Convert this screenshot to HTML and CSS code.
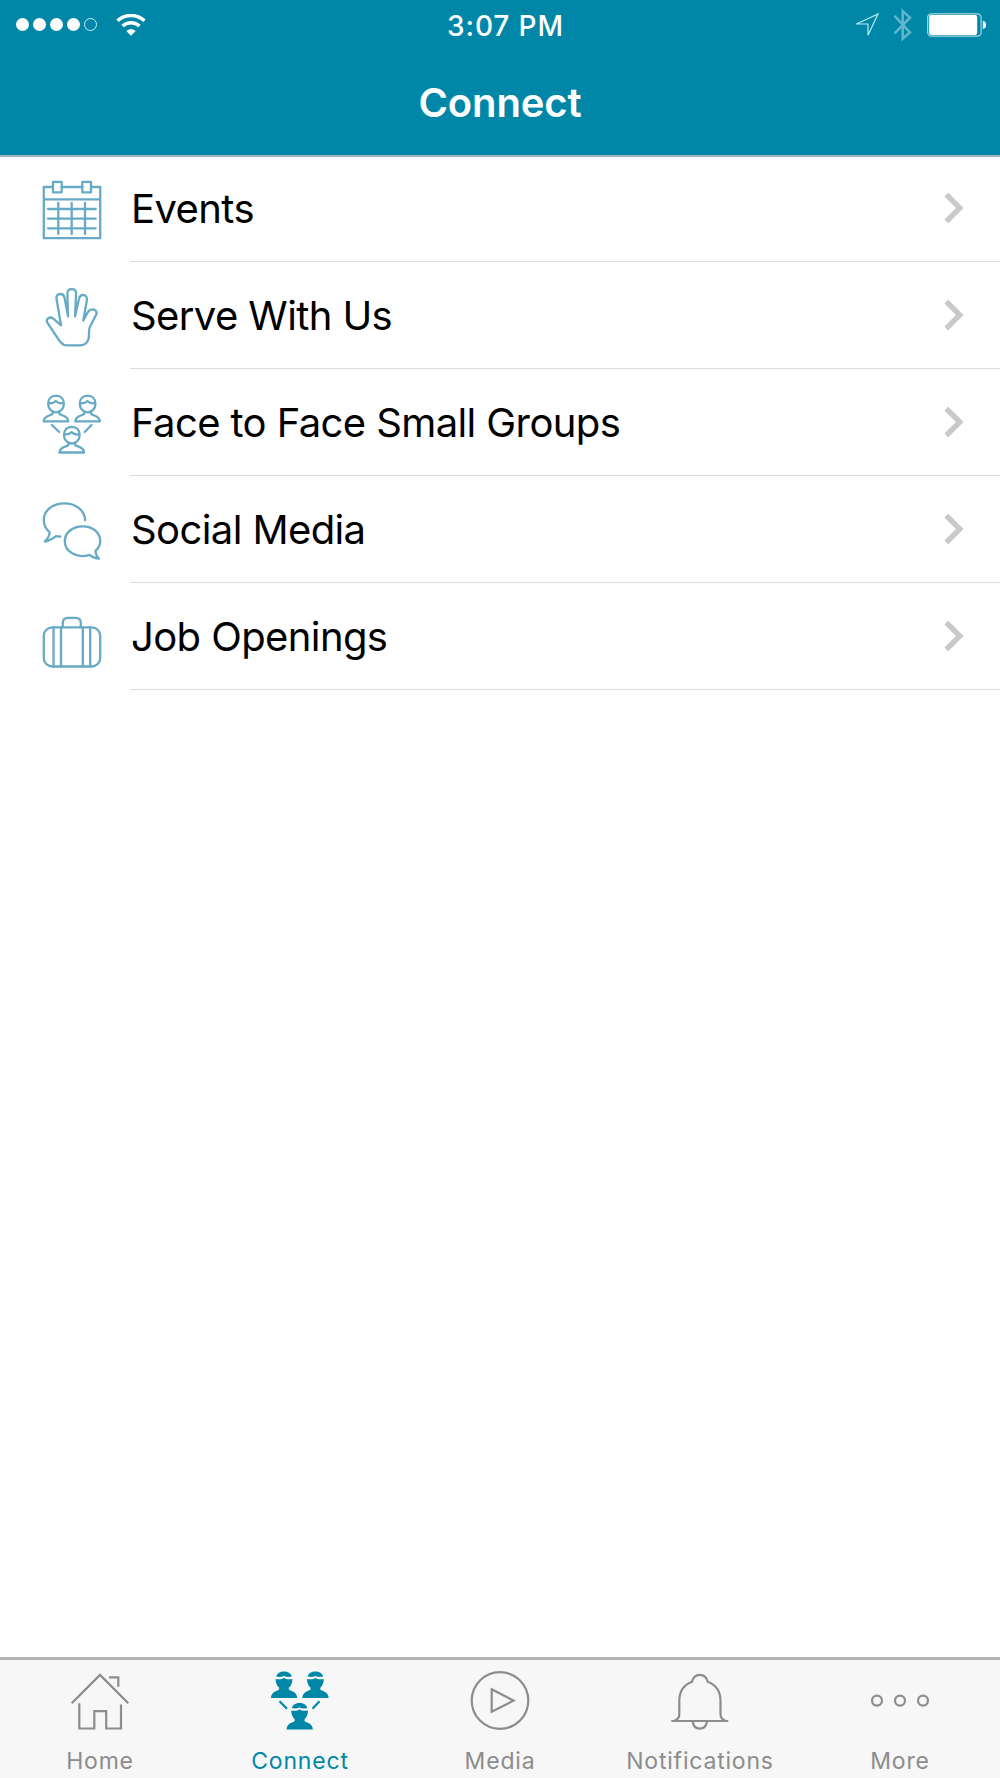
FILE: index.html
```html
<!DOCTYPE html>
<html lang="en">
<head>
  <meta charset="UTF-8">
  <meta name="viewport" content="width=device-width, initial-scale=1.0">
  <title>Connect</title>
  <link rel="stylesheet" href="styles.css">
</head>
<body>

  <!-- shared shapes -->
  <svg class="defs" width="0" height="0">
    <symbol id="chevron" viewBox="0 0 30 30">
      <path d="M6.3 1.5L19.8 15L6.3 28.5"/>
    </symbol>
    <g id="person">
      <path d="M14 1.7C9 1.7 6.2 5 6.2 9.7C6.2 14.5 9.5 18.3 14 18.3S21.8 14.5 21.8 9.7C21.8 5 19 1.7 14 1.7Z"/>
      <path d="M6.5 8.8C9 9.8 11.5 9 13.8 7C16 9 19 9.8 21.5 8.8"/>
      <path d="M10.7 17.5V19.8C9 21.8 2.3 21.2 1.7 27.3H26.3C25.7 21.2 19 21.8 17.3 19.8V17.5"/>
    </g>
    <g id="person-solid">
      <path d="M6.2 6.6C7 3.3 10.3 1.6 14 1.6S21 3.3 21.8 6.6C18.8 7.4 16 7.1 14 5.9C12 7.1 9.2 7.4 6.2 6.6Z"/>
      <path d="M5.6 9C9 9.6 12 9.4 14 7.8C16 9.4 19 9.6 22.4 9C22.4 13.3 20.8 16 18.9 17.8V19.5C21 21.5 27 21.5 27.3 28.1H.9C1.2 21.5 7 21.5 9.1 19.5V17.8C7.2 16 5.6 13.3 5.6 9Z"/>
    </g>
  </svg>

  <header class="header">
    <div class="status-bar">
      <div class="status-left">
        <div class="signal">
          <span class="dot"></span>
          <span class="dot"></span>
          <span class="dot"></span>
          <span class="dot"></span>
          <span class="dot empty"></span>
        </div>
        <svg class="wifi" viewBox="0 0 30 22">
          <path d="M1.5 6.8C9 -.3 21 -.3 28.5 6.8"/>
          <path d="M6.5 12.1C11.3 7.6 18.7 7.6 23.5 12.1"/>
          <path class="wifi-base" d="M10.3 17C13 14.8 17 14.8 19.7 17L15 21.7Z"/>
        </svg>
      </div>
      <div class="time">3:07 PM</div>
      <div class="status-right">
        <svg class="location" viewBox="0 0 26 26">
          <path d="M2.3 13L24 3L14 24.3V13Z"/>
        </svg>
        <svg class="bluetooth" viewBox="0 0 20 34">
          <path d="M1.5 7.8L17 24.3L9.7 30.8V3L17 9.7L1.5 25.3"/>
        </svg>
        <svg class="battery" viewBox="0 0 60 24">
          <rect class="battery-case" x=".7" y=".9" width="53.4" height="22.3" rx="3.6"/>
          <rect class="battery-fill" x="2.2" y="2.1" width="48" height="19.8" rx="2"/>
          <path class="battery-fill" d="M55.8 7.8C60.2 8.5 60.2 15.4 55.8 16.1Z"/>
        </svg>
      </div>
    </div>
    <h1 class="title">Connect</h1>
  </header>

  <ul class="menu">
    <li class="menu-item">
      <svg class="icon" viewBox="0 0 60 60">
        <path d="M11 7H1.8V58.2H58.2V7H49M40.3 7H19.7M1.8 19.3H58.2"/>
        <path d="M11 1.8H19.7V12.3H11ZM40.3 1.8H49V12.3H40.3Z"/>
        <path d="M6 29H53.7M6 38.7H53.7M6 48.3H53.7M16.3 23V54M29.7 23V54M43 23V54"/>
      </svg>
      <a class="menu-link" href="#">
        <span>Events</span>
        <svg class="chevron"><use href="#chevron"/></svg>
      </a>
    </li>
    <li class="menu-item">
      <svg class="icon" viewBox="0 0 60 60">
        <path d="M19 38.3L11.3 31.6C7.8 29 3.2 32 5.5 35.8L15.8 51.3C18.5 55.3 20.5 58.4 24.5 58.4H37.5C43.5 58.4 47 54.5 47 48.5C47 44.5 46.7 41.7 48.3 39L54.1 27.8C55.6 24.5 53.3 22.4 51 22.4C48.7 22.4 46.9 23.5 45.8 25.3L41.3 33.5L44.9 13.3C45.4 9.8 43.6 8 41.2 8C38.8 8 37.5 9.5 37 12L33 29.3L34.1 6.5C34.1 3.5 32.2 2.1 29.7 2.1S25.4 3.5 25.4 6.5L26 29.3L22.5 10.5C22 8 20.2 7 18.2 7C15.6 7 14.1 8.8 14.5 11.8Z"/>
      </svg>
      <a class="menu-link" href="#">
        <span>Serve With Us</span>
        <svg class="chevron"><use href="#chevron"/></svg>
      </a>
    </li>
    <li class="menu-item">
      <svg class="icon" viewBox="0 0 60 60">
        <use href="#person"/>
        <use href="#person" x="31.6"/>
        <use href="#person" x="15.8" y="31.2"/>
        <path d="M9.8 31L17.2 38M49.5 31L42.7 38"/>
      </svg>
      <a class="menu-link" href="#">
        <span>Face to Face Small Groups</span>
        <svg class="chevron"><use href="#chevron"/></svg>
      </a>
    </li>
    <li class="menu-item">
      <svg class="icon" viewBox="0 0 60 60">
        <path d="M43.2 19.3C42.5 9 33.5 2.3 22.5 2.3C10.5 2.3 1.8 9.5 1.8 19C1.8 24.5 4 28.3 7.7 31.3C7.3 35 5.5 38 2.8 40.5C7.5 40 10.5 38 14 35.2C15.3 35.6 16.6 35.6 18.3 35.5"/>
        <path d="M47.3 53.8C35.5 57.8 22.8 51 22.8 40.2C22.8 31.5 30.8 25.3 40.7 25.3S58.2 31.5 58.2 40.2C58.2 44 56.5 47.3 53.4 49.8C53.6 53 54.8 55.5 57 57.6C53 57.3 50 56 47.3 53.8Z"/>
      </svg>
      <a class="menu-link" href="#">
        <span>Social Media</span>
        <svg class="chevron"><use href="#chevron"/></svg>
      </a>
    </li>
    <li class="menu-item">
      <svg class="icon" viewBox="0 0 60 60">
        <rect x="1.8" y="19.3" width="56.4" height="39.2" rx="8.5"/>
        <path d="M11.5 19.3V58.5M19 19.3V58.5M40.8 19.3V58.5M48.2 19.3V58.5"/>
        <path d="M20.8 19.3V15C20.8 11.5 22.5 9.8 26 9.8H33.5C37 9.8 38.8 11.5 38.8 15V19.3"/>
      </svg>
      <a class="menu-link" href="#">
        <span>Job Openings</span>
        <svg class="chevron"><use href="#chevron"/></svg>
      </a>
    </li>
  </ul>

  <nav class="tab-bar">
    <a class="tab" href="#">
      <svg class="tab-icon" viewBox="0 0 60 60">
        <path d="M1.7 33.3L30 4.9L58.3 33.3M39 7.3H48.3V16.7"/>
        <path d="M9.3 33.3V58.5H24.3V41.2H36.2V58.5H51V34.5"/>
      </svg>
      <span>Home</span>
    </a>
    <a class="tab active" href="#">
      <svg class="tab-icon" viewBox="0 0 60 60">
        <g class="solid">
          <use href="#person-solid"/>
          <use href="#person-solid" x="31.4"/>
          <use href="#person-solid" x="15.6" y="31.5"/>
        </g>
        <path d="M9.5 31.2L17 38.7M49.5 31.2L42.5 38.7"/>
      </svg>
      <span>Connect</span>
    </a>
    <a class="tab" href="#">
      <svg class="tab-icon" viewBox="0 0 60 60">
        <circle cx="30" cy="30.5" r="28.3"/>
        <path d="M21.7 19.3L43.5 30.6L21.7 41.8Z"/>
      </svg>
      <span>Media</span>
    </a>
    <a class="tab" href="#">
      <svg class="tab-icon" viewBox="0 0 60 60">
        <path d="M1.3 51H58.3"/>
        <path d="M4.5 50.8C7.8 49.5 9.3 47.3 9.3 44V31C9.3 21.5 14 14.8 22 11.8C23 7.5 25.5 4.8 29.8 4.8S36.7 7.5 37.7 11.8C45.7 14.8 50.5 21.5 50.5 31V44C50.5 47.3 52 49.5 55.3 50.8"/>
        <path d="M22.6 51C23.2 56 26 58.6 29.8 58.6S36.5 56 37.1 51"/>
      </svg>
      <span>Notifications</span>
    </a>
    <a class="tab" href="#">
      <svg class="tab-icon" viewBox="0 0 60 60">
        <circle cx="7" cy="30.6" r="5"/>
        <circle cx="30" cy="30.6" r="5"/>
        <circle cx="53" cy="30.6" r="5"/>
      </svg>
      <span>More</span>
    </a>
  </nav>

</body>
</html>
```
FILE: styles.css
```css
* {
  box-sizing: border-box;
}
body {
  margin: 0;
  height: 1778px;
  display: flex;
  flex-direction: column;
  background-color: #fff;
  font-family: Inter, "Liberation Sans", sans-serif;
  overflow: hidden;
}
a {
  color: inherit;
  text-decoration: none;
}
svg {
  display: block;
  flex-shrink: 0;
  fill: none;
}
.defs {
  position: absolute;
}

/* header */
.header {
  height: 155px;
  flex-shrink: 0;
  background-color: #0087a7;
  box-shadow: 0 2px 0 #9fb3bc;
  color: #fff;
}
.status-bar {
  display: grid;
  grid-template-columns: 1fr auto 1fr;
  align-items: center;
  height: 50px;
  padding: 0 13px 0 16px;
}
.status-left,
.status-right,
.signal {
  display: flex;
  align-items: center;
}
.status-left {
  gap: 19px;
}
.status-right {
  justify-content: flex-end;
}
.signal {
  gap: 4px;
  padding-bottom: 1px;
}
.dot {
  width: 13px;
  height: 13px;
  border-radius: 50%;
  background-color: #fff;
}
.dot.empty {
  background: none;
  border: 1px solid #c5f0f5;
}
.wifi {
  width: 30px;
  height: 22px;
  margin-bottom: 1px;
  stroke: #fff;
  stroke-width: 3.4;
}
.wifi-base {
  fill: #fff;
  stroke: none;
}
.time {
  padding: 2px 0 0 8px;
  font-size: 28px;
  font-weight: 500;
  letter-spacing: 0.9px;
}
.location {
  width: 26px;
  height: 26px;
  margin: 0 13px 2px 0;
  stroke: #b5f0f5;
  stroke-width: 1.2;
}
.bluetooth {
  width: 20px;
  height: 34px;
  margin-right: 14px;
  stroke: #62b6cc;
  stroke-width: 2.5;
}
.battery {
  width: 60px;
  height: 24px;
}
.battery-case {
  stroke: #a4d9e2;
  stroke-width: 1.2;
}
.battery-fill {
  fill: #fff;
}
.title {
  margin: 29px 0 0;
  text-align: center;
  font-size: 40px;
  line-height: 48px;
  font-weight: 600;
  letter-spacing: -0.1px;
}

/* menu list */
.menu {
  flex: 1;
  margin: 0;
  padding: 0;
  list-style: none;
}
.menu-item {
  display: flex;
  height: 107px;
  padding-left: 42px;
}
.icon {
  width: 60px;
  height: 60px;
  margin: 25px 28px 0 0;
  stroke: #67aac5;
  stroke-width: 2.3;
  stroke-linecap: round;
  stroke-linejoin: round;
}
.menu-link {
  flex: 1;
  display: flex;
  align-items: center;
  justify-content: space-between;
  padding: 0 30px 0 1px;
  border-bottom: 1px solid #dcdcdc;
  color: #000;
  font-size: 40px;
  letter-spacing: -0.6px;
}
.chevron {
  width: 30px;
  height: 30px;
  stroke: #c9c9c9;
  stroke-width: 5.4;
}

/* bottom tabs */
.tab-bar {
  display: flex;
  height: 121px;
  flex-shrink: 0;
  padding-top: 10px;
  border-top: 3px solid #b3b3b3;
  background-color: #f7f7f7;
}
.tab {
  flex: 1;
  display: flex;
  flex-direction: column;
  align-items: center;
  gap: 17px;
  color: #8c8c8c;
  font-size: 23px;
  line-height: 28px;
  letter-spacing: 0.8px;
}
.tab.active {
  color: #0087a7;
}
.tab-icon {
  width: 60px;
  height: 60px;
  stroke: currentColor;
  stroke-width: 2.2;
}
.solid {
  fill: currentColor;
  stroke: none;
}
```
